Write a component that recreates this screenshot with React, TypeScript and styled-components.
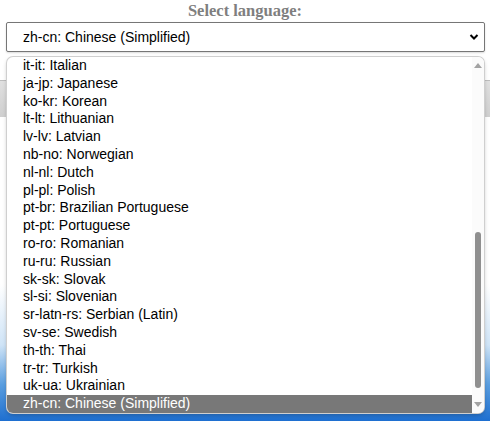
import React from "react";
import styled, { createGlobalStyle } from "styled-components";

const Global = createGlobalStyle`
  html, body { margin: 0; padding: 0; background: #ffffff; }
  #root { width: 490px; height: 421px; overflow: hidden; }
`;

const Page = styled.div`
  position: relative;
  width: 490px;
  height: 421px;
  overflow: hidden;
  display: flex;
  flex-direction: column;
  background: #ffffff;
`;

const Heading = styled.div`
  font-family: "Liberation Serif", "DejaVu Serif", serif;
  font-weight: bold;
  font-size: 16.5px;
  color: #7f7f7f;
  text-align: center;
  height: 22px;
  line-height: 22px;
`;

const SelectBox = styled.div`
  margin: 0 5px 0 6px;
  height: 28px;
  border: 1px solid #767676;
  border-radius: 2px;
  box-shadow: 0 1px 2px rgba(0, 0, 0, 0.15);
  display: flex;
  align-items: center;
  justify-content: space-between;
  padding: 0 5px 0 16px;
  font-family: "Liberation Sans", Arial, sans-serif;
  font-size: 14px;
  color: #000;
  background: #fff;
`;

const Behind = styled.div`
  flex: 1;
  display: flex;
  flex-direction: column;
  margin-top: 28px;
`;

const GhostField = styled.div`
  height: 36px;
  background: linear-gradient(#e0e0e0, #cfcfcf);
  border-top: 1px solid #bdbdbd;
`;

const Gap = styled.div`
  flex: 1;
  background: linear-gradient(#ffffff 0%, #ffffff 55%, #cfe4f7 75%, #5a9ee0 88%, #1e6fd0 100%);
`;

const Popup = styled.div`
  position: absolute;
  top: 57px;
  left: 7px;
  width: 477px;
  height: 356px;
  background: #fff;
  border-radius: 6px;
  box-shadow: 0 0 0 1px #cfcfcf, 0 2px 4px rgba(0, 0, 0, 0.25);
  overflow: hidden;
  display: flex;
`;

const List = styled.div`
  flex: 1;
  display: flex;
  flex-direction: column;
`;

const Option = styled.div<{ $selected?: boolean }>`
  height: 17.8px;
  line-height: 17.8px;
  padding-left: 16px;
  font-family: "Liberation Sans", Arial, sans-serif;
  font-size: 14px;
  color: ${(p) => (p.$selected ? "#ffffff" : "#000000")};
  background: ${(p) => (p.$selected ? "#787878" : "transparent")};
  white-space: nowrap;
`;

const Scrollbar = styled.div`
  width: 12px;
  display: flex;
  flex-direction: column;
  align-items: center;
  background: #fbfbfb;
`;

const Arrow = styled.div`
  height: 17px;
  display: flex;
  align-items: center;
  justify-content: center;
`;

const Track = styled.div`
  flex: 1;
  width: 100%;
  display: flex;
  flex-direction: column;
  align-items: center;
`;

const Thumb = styled.div`
  width: 6px;
  margin-top: 158px;
  height: 156px;
  border-radius: 3px;
  background: #8f8f8f;
`;

const items = [
  "it-it: Italian",
  "ja-jp: Japanese",
  "ko-kr: Korean",
  "lt-lt: Lithuanian",
  "lv-lv: Latvian",
  "nb-no: Norwegian",
  "nl-nl: Dutch",
  "pl-pl: Polish",
  "pt-br: Brazilian Portuguese",
  "pt-pt: Portuguese",
  "ro-ro: Romanian",
  "ru-ru: Russian",
  "sk-sk: Slovak",
  "sl-si: Slovenian",
  "sr-latn-rs: Serbian (Latin)",
  "sv-se: Swedish",
  "th-th: Thai",
  "tr-tr: Turkish",
  "uk-ua: Ukrainian",
  "zh-cn: Chinese (Simplified)",
];

export default function App() {
  return (
    <>
      <Global />
      <Page>
        <Heading>Select language:</Heading>
        <SelectBox>
          <span>zh-cn: Chinese (Simplified)</span>
          <svg width="10" height="8" viewBox="0 0 10 8">
            <path d="M1.5 2 L5 5.5 L8.5 2" fill="none" stroke="#000" strokeWidth="2" />
          </svg>
        </SelectBox>
        <Behind>
          <GhostField />
          <Gap />
        </Behind>
        <Popup>
          <List>
            {items.map((t) => (
              <Option key={t} $selected={t.startsWith("zh-cn")}>
                {t}
              </Option>
            ))}
          </List>
          <Scrollbar>
            <Arrow>
              <svg width="8" height="5" viewBox="0 0 8 5">
                <path d="M0 5 L4 0 L8 5 Z" fill="#a3a3a3" />
              </svg>
            </Arrow>
            <Track>
              <Thumb />
            </Track>
            <Arrow>
              <svg width="8" height="5" viewBox="0 0 8 5">
                <path d="M0 0 L4 5 L8 0 Z" fill="#a3a3a3" />
              </svg>
            </Arrow>
          </Scrollbar>
        </Popup>
      </Page>
    </>
  );
}
